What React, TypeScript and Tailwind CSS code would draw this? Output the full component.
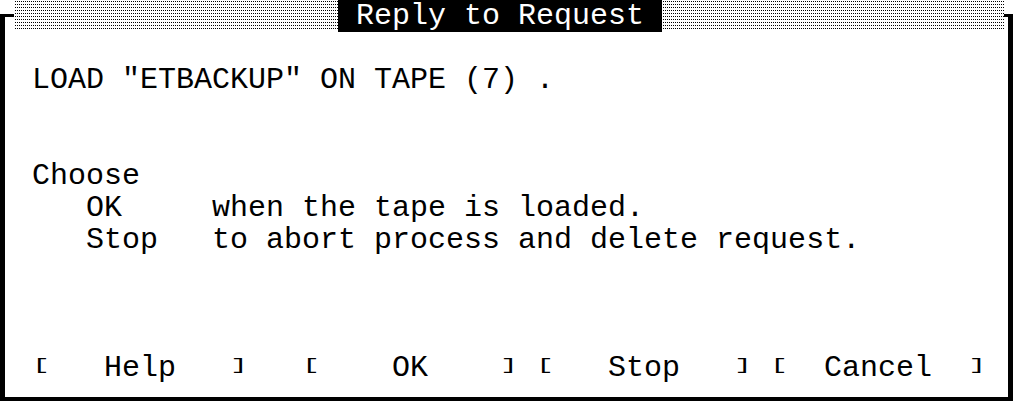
import React from "react";

function Dots({ id, className }: { id: string; className: string }) {
  return (
    <div className={`relative h-[31px] ${className}`}>
      <svg className="absolute inset-0" width="100%" height="100%">
        <defs>
          <pattern id={id} width="2" height="3" patternUnits="userSpaceOnUse" x="1" y="1">
            <rect width="1" height="1" fill="#000" />
          </pattern>
        </defs>
        <rect width="100%" height="100%" fill={`url(#${id})`} />
      </svg>
    </div>
  );
}

const lines: string[] = [
  "",
  'LOAD "ETBACKUP" ON TAPE (7) .',
  "",
  "",
  "Choose",
  "   OK     when the tape is loaded.",
  "   Stop   to abort process and delete request.",
  "",
  "",
  "",
];

function Br({ c }: { c: string }) {
  return (
    <span className="inline-block w-[18px] h-[32px] align-top text-center leading-[32px] scale-y-[0.55] -translate-y-[2px]">
      {c}
    </span>
  );
}

function Button({ label }: { label: string }) {
  return (
    <span className="whitespace-pre">
      <Br c="[" />
      {label}
      <Br c="]" />
    </span>
  );
}

export default function App() {
  return (
    <div className="w-[1013px] h-[401px] bg-white overflow-hidden flex flex-col text-black font-['Liberation_Mono',monospace] text-[30px] leading-[32px]">
      <div className="flex h-[32px] shrink-0">
        <div className="w-[14px] shrink-0">
          <div className="mt-[14px] h-[18px] border-l-[5px] border-t-[3px] border-black" />
        </div>
        <Dots id="dl" className="w-[324px] shrink-0" />
        <div className="w-[324px] h-[32px] shrink-0 bg-black text-white whitespace-pre">
          {" Reply to Request "}
        </div>
        <Dots id="dr" className="flex-1" />
        <div className="w-[9px] shrink-0">
          <div className="mt-[14px] h-[18px] border-r-[5px] border-t-[3px] border-black" />
        </div>
      </div>
      <div className="flex-1 flex flex-col border-l-[5px] border-r-[5px] border-b-[4px] border-black pl-[27px]">
        {lines.map((l, i) => (
          <div key={i} className="h-[32px] whitespace-pre">
            {l}
          </div>
        ))}
        <div className="h-[32px] whitespace-pre flex">
          <Button label="   Help   " />
          <span className="w-[54px]" />
          <Button label="    OK    " />
          <span className="w-[18px]" />
          <Button label="   Stop   " />
          <span className="w-[18px]" />
          <Button label="  Cancel  " />
        </div>
      </div>
    </div>
  );
}
